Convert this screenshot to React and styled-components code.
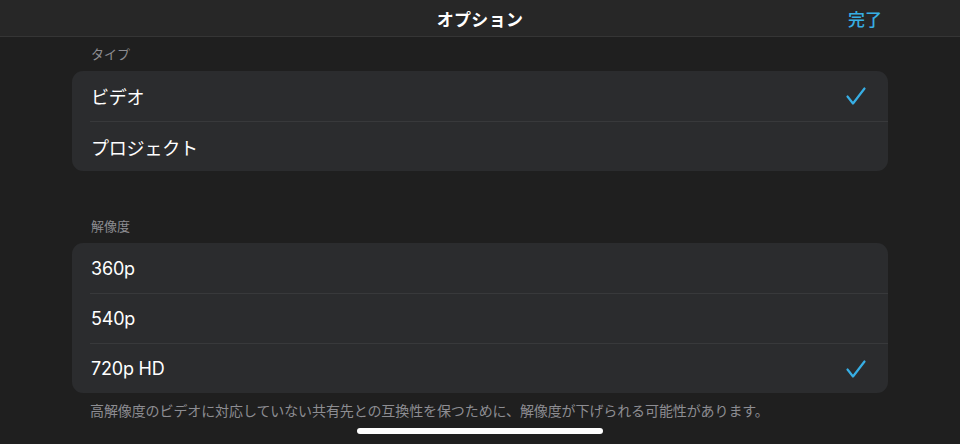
import React from 'react';
import styled, { createGlobalStyle } from 'styled-components';

const GlobalStyle = createGlobalStyle`
    html, body {
        margin: 0;
        padding: 0;
        background: #1f1f1f;
    }
    body {
        font-family: "Inter", "Noto Sans CJK JP", sans-serif;
        -webkit-font-smoothing: antialiased;
    }
`;

const Screen = styled.div`
    width: 960px;
    height: 444px;
    background: #1f1f1f;
    display: flex;
    flex-direction: column;
    overflow: hidden;
`;

const Header = styled.header`
    height: 36px;
    display: grid;
    grid-template-columns: 1fr auto 1fr;
    align-items: center;
    background: #272727;
    border-bottom: 1px solid #353535;
`;

const Title = styled.h1`
    grid-column: 2;
    margin: 0;
    font-size: 17px;
    font-weight: 700;
    color: #ffffff;
    letter-spacing: 0.3px;
`;

const DoneButton = styled.button`
    grid-column: 3;
    justify-self: end;
    margin-right: 78px;
    padding: 0;
    background: none;
    border: none;
    font-family: inherit;
    font-size: 17px;
    font-weight: 500;
    color: #37aee4;
    cursor: pointer;
`;

const Content = styled.main`
    flex: 1;
    display: flex;
    flex-direction: column;
    padding: 8px 72px 0;
`;

const Section = styled.section`
    display: flex;
    flex-direction: column;
    margin-bottom: ${(p) => p.$gap || 0}px;
`;

const SectionLabel = styled.div`
    padding-left: 19px;
    height: 18px;
    line-height: 18px;
    font-size: 13px;
    color: #8d8d92;
    margin-bottom: 8px;
`;

const Card = styled.div`
    background: #2b2c2e;
    border-radius: 11px;
    overflow: hidden;
`;

const Row = styled.div`
    height: 50px;
    display: flex;
    align-items: center;
    justify-content: space-between;
    padding: 0 22px 0 19px;
    font-size: 18px;
    letter-spacing: -0.2px;
    color: #ffffff;
    cursor: pointer;

    & + & {
        border-top: 1px solid #38393b;
        height: 49px;
        margin-left: 18px;
        padding-left: 1px;
    }
`;

const FooterNote = styled.p`
    margin: 9px 0 0;
    padding-left: 18px;
    font-size: 14px;
    line-height: 18px;
    letter-spacing: -0.1px;
    color: #8d8d92;
`;

const HomeIndicator = styled.div`
    width: 246px;
    height: 6px;
    border-radius: 3px;
    background: #ffffff;
    margin: 8px auto 0;
`;

const Check = () => (
    <svg width="20" height="18" viewBox="0 0 20 18" fill="none">
        <polyline
            points="1.5,9.5 7,16.5 18.5,1.5"
            stroke="#37aee4"
            strokeWidth="2.2"
            strokeLinecap="round"
            strokeLinejoin="round"
        />
    </svg>
);

const typeOptions = ['ビデオ', 'プロジェクト'];
const resolutionOptions = ['360p', '540p', '720p HD'];

const App = () => {
    const selectedType = 'ビデオ';
    const selectedResolution = '720p HD';

    return (
        <Screen>
            <GlobalStyle />
            <Header>
                <Title>オプション</Title>
                <DoneButton>完了</DoneButton>
            </Header>
            <Content>
                <Section $gap={46}>
                    <SectionLabel>タイプ</SectionLabel>
                    <Card>
                        {typeOptions.map((t) => (
                            <Row key={t}>
                                <span>{t}</span>
                                {t === selectedType && <Check />}
                            </Row>
                        ))}
                    </Card>
                </Section>
                <Section>
                    <SectionLabel>解像度</SectionLabel>
                    <Card>
                        {resolutionOptions.map((r) => (
                            <Row key={r}>
                                <span>{r}</span>
                                {r === selectedResolution && <Check />}
                            </Row>
                        ))}
                    </Card>
                    <FooterNote>
                        高解像度のビデオに対応していない共有先との互換性を保つために、解像度が下げられる可能性があります。
                    </FooterNote>
                </Section>
                <HomeIndicator />
            </Content>
        </Screen>
    );
};

export default App;
